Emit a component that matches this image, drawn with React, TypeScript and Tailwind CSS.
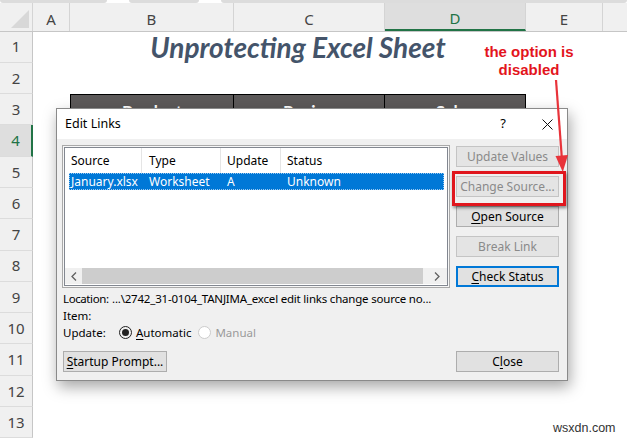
import React from "react";

const cols = [
  { key: "A", w: "w-[37px]" },
  { key: "B", w: "w-[164px]" },
  { key: "C", w: "w-[151px]" },
  { key: "D", w: "w-[141px]" },
  { key: "E", w: "w-[77px]" },
];

const rows = [1, 2, 3, 4, 5, 6, 7, 8, 9, 10, 11, 12, 13];

const SheetHeader = () => (
  <div className="flex h-[28.5px] bg-[#f0f0f0] border-b border-[#c6c6c6]">
    <div className="relative w-[33px] shrink-0 border-r border-[#d4d4d4]">
      <div className="absolute right-[3px] bottom-[3px] w-0 h-0 border-l-[18px] border-l-transparent border-b-[18px] border-b-[#d8d8d8]" />
    </div>
    {cols.map((c) => (
      <div
        key={c.key}
        className={`${c.w} shrink-0 flex items-center justify-center pt-[4px] text-[15px] text-[#444] border-r border-[#d4d4d4] ${
          c.key === "D" ? "bg-[#dedede] text-[#217346] border-b-2 border-b-[#217346]" : ""
        }`}
      >
        {c.key}
      </div>
    ))}
    <div className="flex-1" />
  </div>
);

const SheetRow = ({ n }: { n: number }) => (
  <div className="flex h-[31.3px]">
    <div
      className={`w-[33px] shrink-0 flex items-center justify-center text-[15px] text-[#444] border-b border-[#dcdcdc] ${
        n === 4
          ? "bg-[#dedede] text-[#217346] border-r-2 border-r-[#217346]"
          : "bg-[#f0f0f0] border-r border-r-[#c6c6c6]"
      }`}
    >
      {n}
    </div>
    <div className="w-[37px] shrink-0" />
    {n === 1 ? (
      <div className="w-[456px] shrink-0 flex items-center justify-center font-['Lato'] font-bold italic text-[28px] text-[#44546a]">
        Unprotecting Excel Sheet
      </div>
    ) : n === 3 ? (
      <div className="flex h-full">
        {["Product", "Region", "Sales"].map((t, i) => (
          <div
            key={t}
            className={`${["w-[164px]", "w-[151px]", "w-[141px]"][i]} shrink-0 h-full flex items-center justify-center pt-[4px] bg-[#5c5959] border border-black ${
              i > 0 ? "border-l-0" : ""
            } font-['Lato'] font-bold text-[17px] text-white`}
          >
            {t}
          </div>
        ))}
      </div>
    ) : (
      <div className="w-[456px] shrink-0" />
    )}
    <div className="flex-1" />
  </div>
);

const Btn = ({
  children,
  disabled,
  focus,
  w = "w-[103px]",
}: {
  children: React.ReactNode;
  disabled?: boolean;
  focus?: boolean;
  w?: string;
}) => (
  <div
    className={`${w} h-[21px] shrink-0 flex items-center justify-center text-[12px] ${
      disabled
        ? "bg-[#e4e4e4] border border-[#c4c4c4] text-[#8a8a8a]"
        : focus
        ? "bg-[#e1e1e1] border-2 border-[#0078d7] text-black"
        : "bg-[#e1e1e1] border border-[#adadad] text-black"
    }`}
  >
    {children}
  </div>
);

const Dialog = () => (
  <div className="absolute left-[56px] top-[108px] w-[512px] h-[273px] flex flex-col border border-[#8a8a8a] bg-[#f0f0f0] shadow-[2px_6px_14px_rgba(0,0,0,0.35)] font-['Noto_Sans'] text-[12px] text-black">
    <div className="h-[30px] shrink-0 bg-white flex items-center pl-[8px] pr-[14px] text-[12.5px]">
      <span className="flex-1">Edit Links</span>
      <span className="mr-[36px] text-[13px]">?</span>
      <svg width="11" height="11" viewBox="0 0 11 11">
        <path d="M0.5 0.5L10.5 10.5M10.5 0.5L0.5 10.5" stroke="#111" strokeWidth="1" />
      </svg>
    </div>
    <div className="flex-1 flex flex-col pl-[5px] pr-[8px] pt-[6px]">
      <div className="flex gap-[6px]">
        <div className="w-[388px] h-[143px] border border-[#a9a9a9] p-px bg-[#f7f7f7]">
          <div className="h-full flex flex-col border border-[#828790] bg-white">
            <div className="h-[25px] shrink-0 flex items-center">
              <div className="w-[77px] pl-[6px] h-full flex items-center border-r border-[#e5e5e5]">Source</div>
              <div className="w-[79px] pl-[7px] h-full flex items-center border-r border-[#e5e5e5]">Type</div>
              <div className="w-[60px] pl-[6px] h-full flex items-center border-r border-[#e5e5e5]">Update</div>
              <div className="pl-[6px]">Status</div>
            </div>
            <div className="h-[17px] shrink-0 flex items-center ml-[4px] mr-[3px] bg-[#0078d7] text-white outline-1 outline-dotted outline-offset-[-1px] outline-[#9cc9f0]">
              <div className="w-[73px] pl-[2px]">January.xlsx</div>
              <div className="w-[79px] pl-[7px]">Worksheet</div>
              <div className="w-[60px] pl-[6px]">A</div>
              <div className="pl-[6px]">Unknown</div>
            </div>
            <div className="flex-1" />
            <div className="h-[16px] shrink-0 flex items-center bg-[#f0f0f0] mb-[1px]">
              <div className="w-[17px] h-full flex items-center justify-center">
                <svg width="6" height="9" viewBox="0 0 6 9">
                  <path d="M5 0.5L1 4.5L5 8.5" stroke="#606060" strokeWidth="1.3" fill="none" />
                </svg>
              </div>
              <div className="flex-1 h-full bg-[#cdcdcd]" />
              <div className="w-[24px] h-full flex items-center justify-end pr-[7px]">
                <svg width="6" height="9" viewBox="0 0 6 9">
                  <path d="M1 0.5L5 4.5L1 8.5" stroke="#606060" strokeWidth="1.3" fill="none" />
                </svg>
              </div>
            </div>
          </div>
        </div>
        <div className="flex flex-col gap-[9px] pt-[1px]">
          <Btn disabled>Update Values</Btn>
          <Btn disabled>Change Source...</Btn>
          <Btn>
            <span className="underline underline-offset-2">O</span>pen Source
          </Btn>
          <Btn disabled>Break Link</Btn>
          <Btn focus>
            <span className="underline underline-offset-2">C</span>heck Status
          </Btn>
        </div>
      </div>
      <div className="mt-[2px] pl-[1px] flex flex-col leading-[17px] text-[11.5px]">
        <div className="flex">
          <span className="w-[49px] shrink-0 tracking-[-0.4px]">Location:</span>
          <span className="tracking-[-0.2px] whitespace-nowrap">
            ...\2742_31-0104_TANJIMA_excel edit links change source no...
          </span>
        </div>
        <div className="flex">
          <span className="w-[49px] shrink-0">Item:</span>
        </div>
        <div className="flex items-center">
          <span className="w-[56px] shrink-0">Update:</span>
          <span className="w-[13px] h-[13px] rounded-full border border-[#222] flex items-center justify-center mr-[4px]">
            <span className="w-[7px] h-[7px] rounded-full bg-[#222]" />
          </span>
          <span>
            <span className="underline underline-offset-2">A</span>utomatic
          </span>
          <span className="w-[13px] h-[13px] rounded-full border border-[#cccccc] bg-white ml-[7px] mr-[4px]" />
          <span className="text-[#9a9a9a]">Manual</span>
        </div>
      </div>
      <div className="mt-[10px] flex justify-between pl-[1px]">
        <Btn w="w-[104px]">
          <span className="underline underline-offset-2">S</span>tartup Prompt...
        </Btn>
        <Btn>
          C<span className="underline underline-offset-2">l</span>ose
        </Btn>
      </div>
    </div>
  </div>
);

export default function App() {
  return (
    <div className="relative w-[627px] h-[438px] overflow-hidden bg-white font-['Noto_Sans']">
      <div className="flex h-[3px] gap-[22px] bg-white">
        <div className="w-[107px] bg-[#dcdcdc] rounded-b-[3px]" />
        <div className="w-[70px] bg-[#dcdcdc] rounded-b-[3px]" />
        <div className="flex-1 bg-[#dcdcdc] rounded-b-[3px]" />
      </div>
      <SheetHeader />
      {rows.map((n) => (
        <SheetRow key={n} n={n} />
      ))}

      <Dialog />

      {/* red callout over the disabled button */}
      <div className="absolute left-[452px] top-[171px] w-[114px] h-[35px] border-[3.5px] border-[#e0161d] shadow-[1px_2px_3px_rgba(0,0,0,0.45)]" />
      <div className="absolute left-[470px] top-[43px] w-[118px] text-center font-['Liberation_Sans'] font-bold text-[15px] leading-[18px] text-[#e3141c]">
        the option is
        <br />
        disabled
      </div>
      <svg className="absolute left-0 top-0" width="627" height="438" viewBox="0 0 627 438">
        <line x1="556" y1="80" x2="562" y2="160" stroke="#e8333a" strokeWidth="2.2" />
        <polygon points="555.5,156 568,155 562.8,172" fill="#e8333a" />
      </svg>
      <div className="absolute left-[553px] top-[419px] font-['Liberation_Sans'] text-[12.5px] text-[#333]">
        wsxdn.com
      </div>
    </div>
  );
}
